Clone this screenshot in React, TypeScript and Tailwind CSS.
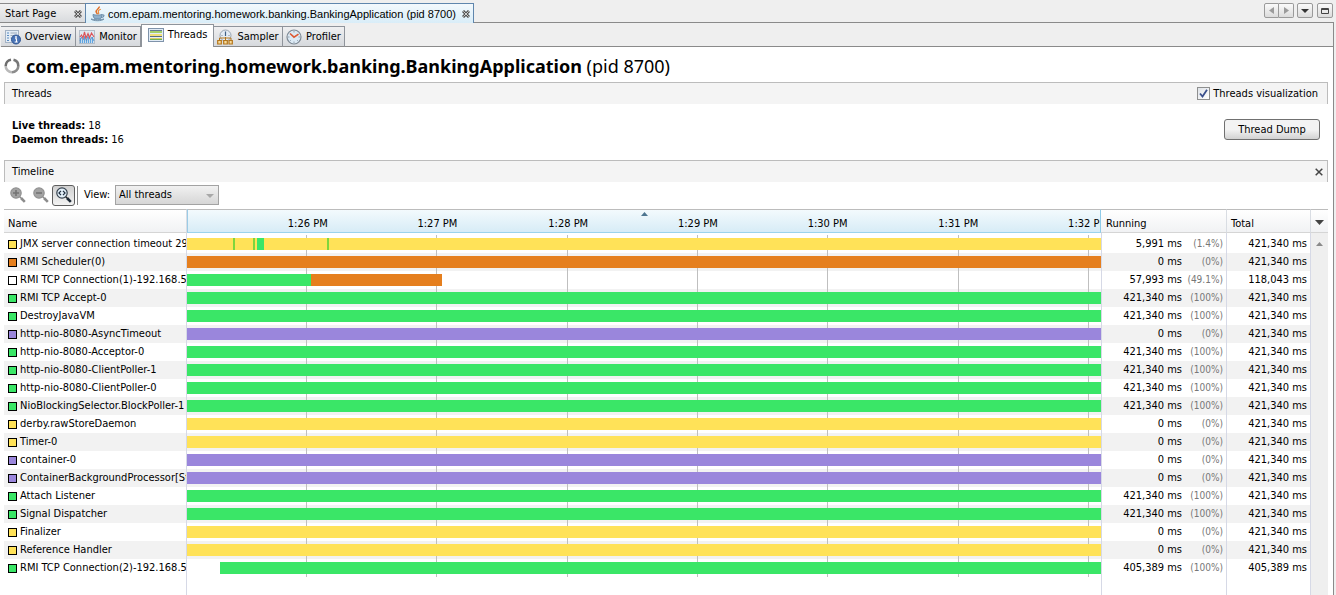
import { useState, type ReactNode } from "react";

const YELLOW = "#ffe258";
const ORANGE = "#e57f1e";
const GREEN = "#3ae667";
const PURPLE = "#9a86dc";
const LIME = "#7fd63c";
const WHITE = "#ffffff";

type Segment = { from: number; to: number; color: string };
type Thread = {
  name: string;
  state: string;
  segments: Segment[];
  running: string;
  percent: string;
  total: string;
};

const full = (name: string, color: string): Thread => ({
  name,
  state: color,
  segments: [{ from: 0, to: 100, color }],
  running: color === GREEN ? "421,340 ms" : "0 ms",
  percent: color === GREEN ? "(100%)" : "(0%)",
  total: "421,340 ms",
});

const threads: Thread[] = [
  {
    name: "JMX server connection timeout 29",
    state: YELLOW,
    segments: [
      { from: 0, to: 100, color: YELLOW },
      { from: 5.03, to: 5.25, color: LIME },
      { from: 7.22, to: 7.44, color: LIME },
      { from: 7.66, to: 8.42, color: GREEN },
      { from: 15.32, to: 15.54, color: LIME },
    ],
    running: "5,991 ms",
    percent: "(1.4%)",
    total: "421,340 ms",
  },
  full("RMI Scheduler(0)", ORANGE),
  {
    name: "RMI TCP Connection(1)-192.168.56.1",
    state: WHITE,
    segments: [
      { from: 0, to: 13.57, color: GREEN },
      { from: 13.57, to: 27.9, color: ORANGE },
    ],
    running: "57,993 ms",
    percent: "(49.1%)",
    total: "118,043 ms",
  },
  full("RMI TCP Accept-0", GREEN),
  full("DestroyJavaVM", GREEN),
  full("http-nio-8080-AsyncTimeout", PURPLE),
  full("http-nio-8080-Acceptor-0", GREEN),
  full("http-nio-8080-ClientPoller-1", GREEN),
  full("http-nio-8080-ClientPoller-0", GREEN),
  full("NioBlockingSelector.BlockPoller-1", GREEN),
  full("derby.rawStoreDaemon", YELLOW),
  full("Timer-0", YELLOW),
  full("container-0", PURPLE),
  full("ContainerBackgroundProcessor[StandardEngine]", PURPLE),
  full("Attach Listener", GREEN),
  full("Signal Dispatcher", GREEN),
  full("Finalizer", YELLOW),
  full("Reference Handler", YELLOW),
  {
    name: "RMI TCP Connection(2)-192.168.56.1",
    state: GREEN,
    segments: [{ from: 3.61, to: 100, color: GREEN }],
    running: "405,389 ms",
    percent: "(100%)",
    total: "405,389 ms",
  },
];

const ticks = [
  { at: 13.02, label: "1:26 PM" },
  { at: 27.24, label: "1:27 PM" },
  { at: 41.58, label: "1:28 PM" },
  { at: 55.8, label: "1:29 PM" },
  { at: 70.02, label: "1:30 PM" },
  { at: 84.35, label: "1:31 PM" },
  { at: 98.58, label: "1:32 PM" },
];

function JavaIcon() {
  return (
    <svg width="16" height="16" viewBox="0 0 16 16" fill="none" aria-hidden="true">
      <path d="M9.2 0.5C10 2.4 5.4 3.6 6.2 6c.3 1 1.2 1.4 1.1 2.4" stroke="#e0702a" strokeWidth="1.5" />
      <path d="M10.8 3.2C8.6 4 7.7 5 8.5 6.2c.5.8.4 1.4-.3 2" stroke="#e98b3c" strokeWidth="1.2" />
      <path d="M3 8.5c2 .9 7 .9 9 0-.1 2-.8 3.6-1.9 4.4H5C3.8 12 3.1 10.5 3 8.5Z" fill="#8fb0cb" stroke="#6d8eac" />
      <path d="M12 9c2.5-.8 3 2-.9 2.7" stroke="#6d8eac" strokeWidth="1.2" />
      <path d="M1 13c2 2.300 11 2.300 13 0-2.500 1-10.500 1-13 0Z" fill="#b9cddc" stroke="#7593ac" />
    </svg>
  );
}

function TabCloseIcon() {
  return (
    <svg width="8" height="8" viewBox="0 0 8 8" fill="none" aria-hidden="true">
      <path d="M1 1l6 6M7 1L1 7" stroke="#555" strokeWidth="3" />
      <path d="M1.3 1.3l5.4 5.4M6.7 1.3L1.3 6.7" stroke="#eee" strokeWidth="0.8" />
    </svg>
  );
}

function OverviewIcon() {
  return (
    <svg width="16" height="16" viewBox="0 0 16 16" aria-hidden="true">
      <rect x="0.5" y="1.5" width="13" height="12" fill="#e4edf6" stroke="#a3b2c4" />
      <path d="M2 4h2M2 6.500h2M2 9h2M2 11.500h2" stroke="#5b8cc2" />
      <path d="M5.5 4H12M5.5 6.500H9M5.5 9H7" stroke="#9caaba" />
      <circle cx="11" cy="10.5" r="4.5" fill="#4a74b6" stroke="#2f5491" />
      <circle cx="11" cy="8" r="0.9" fill="#fff" />
      <path d="M10 9.8h1.500V13M9.700 13h3" stroke="#fff" strokeWidth="1.1" fill="none" />
    </svg>
  );
}

function MonitorIcon() {
  return (
    <svg width="16" height="16" viewBox="0 0 16 16" fill="none" aria-hidden="true">
      <rect x="0.5" y="1.5" width="15" height="13" fill="#dfe8f1" stroke="#b4bdc8" />
      <path d="M1.500 14V9M3.500 14v-3M5.500 14V8M7.500 14v-4M9.500 14V8M11.500 14v-3M13.500 14V8" stroke="#5fa4e0" strokeWidth="1.2" />
      <path d="M1 12l1.500-4L4 11l2-4 1.500 5 2-7 2 6L13 8l2 4" stroke="#5293cf" strokeWidth="0.9" />
      <path d="M1 8l1.500-2L4 9l1.500-6L7 9l2-4.500L10.500 9l2-5L15 8" stroke="#dc5258" strokeWidth="1.1" />
    </svg>
  );
}

function ThreadsIcon() {
  return (
    <svg width="16" height="16" viewBox="0 0 16 16" shapeRendering="crispEdges" aria-hidden="true">
      <rect x="0.5" y="1.5" width="15" height="13" fill="#e2ecf7" stroke="#7f93aa" />
      <rect x="2" y="3" width="12" height="1" fill="#65798f" />
      <rect x="2" y="4" width="12" height="2" fill="#a4cf68" />
      <rect x="2" y="7" width="12" height="2" fill="#f1df78" />
      <rect x="2" y="9" width="12" height="1" fill="#5a6c80" />
      <rect x="2" y="11" width="12" height="1" fill="#d9cf62" />
      <rect x="2" y="12" width="12" height="1" fill="#6fae54" />
    </svg>
  );
}

function SamplerIcon() {
  return (
    <svg width="16" height="16" viewBox="0 0 16 16" fill="none" aria-hidden="true">
      <circle cx="8.5" cy="6.5" r="5.5" fill="#e3ecf4" stroke="#98a4b1" />
      <path d="M8.500 2.500V7" stroke="#3f5f83" strokeWidth="1.200" />
      <path d="M4.500 6.500h1M11.500 6.500h1" stroke="#7d8b9a" />
      <path d="M2.500 11V9h11.500v2M8.500 8v3" stroke="#b5761b" />
      <path d="M0.700 11.500h3.600v3.500H.7ZM6.700 11.500h3.600v3.500H6.700ZM12 11.500h3.300v3.500H12Z" fill="#f7dc9c" stroke="#b5761b" strokeWidth="1.200" />
    </svg>
  );
}

function ProfilerIcon() {
  return (
    <svg width="16" height="16" viewBox="0 0 16 16" fill="none" aria-hidden="true">
      <circle cx="8" cy="8" r="7" fill="#dceaf5" stroke="#7f8a95" strokeWidth="1.200" />
      <path d="M8 2v1.500M8 12.500V14M2 8h1.500M12.500 8H14M3.800 12.200l1-1M12.200 12.200l-1-1" stroke="#93a1ae" />
      <path d="M4 4.500L8 8.200l4.500-3" stroke="#dd5a34" strokeWidth="1.600" />
    </svg>
  );
}

function SpinnerIcon() {
  return (
    <svg width="16" height="16" viewBox="0 0 16 16" fill="none" strokeWidth="2.600" aria-hidden="true">
      <path d="M9.500 1.800A6.300 6.300 0 0 1 14.300 8" stroke="#777" />
      <path d="M14.300 8A6.300 6.300 0 0 1 8 14.300" stroke="#8c8c8c" />
      <path d="M8 14.300A6.300 6.300 0 0 1 1.700 8" stroke="#b9b9b9" />
      <path d="M1.700 8A6.300 6.300 0 0 1 7 1.800" stroke="#6e6e6e" />
    </svg>
  );
}

function Magnifier({ kind }: { kind: "in" | "out" | "fit" }) {
  const fit = kind === "fit";
  return (
    <svg width="16" height="16" viewBox="0 0 16 16" fill="none" aria-hidden="true">
      <path d="M9.500 9.500L11 11" stroke={fit ? "#222" : "#8a8a8a"} strokeWidth="1.500" />
      <path d="M11 11l3.800 3.800" stroke={fit ? "#1d2936" : "#8c8c8c"} strokeWidth="2.600" />
      <circle cx="6" cy="6" r="5.200" fill={fit ? "#e3f0fa" : "#a3a3a3"} stroke={fit ? "#35414d" : "#929292"} strokeWidth="1.200" />
      {kind === "in" && <path d="M3 6h6M6 3v6" stroke="#747474" strokeWidth="1.600" />}
      {kind === "out" && <path d="M3 6h6" stroke="#747474" strokeWidth="1.600" />}
      {fit && <path d="M5 3.800L2.900 6 5 8.200M7 3.800L9.100 6 7 8.200" stroke="#1f2f40" strokeWidth="1.200" />}
    </svg>
  );
}

function SubTab({ icon, label, width, active }: { icon: ReactNode; label: string; width: string; active?: boolean }) {
  return (
    <button
      type="button"
      role="tab"
      aria-selected={!!active}
      className={`${width} flex items-center justify-center gap-1 border-r border-[#8f949b] ${
        active
          ? "h-[23px] border-t border-l bg-white pb-[2px]"
          : "h-[21px] border-t border-b border-b-[#8a8a8a] bg-linear-to-b from-[#f0f0f1] to-[#d6d9dd] pt-px"
      }`}
    >
      {icon}
      {label}
    </button>
  );
}

function SectionBar({ title, children }: { title: string; children: ReactNode }) {
  return (
    <div className="flex h-[22px] items-center justify-between border-x border-t border-[#bcbcbc] bg-[#f4f4f4] pl-[7px]">
      <h2>{title}</h2>
      {children}
    </div>
  );
}

function TimelineBars({ segments }: { segments: Segment[] }) {
  return (
    <svg width="100%" height="18" className="block" aria-hidden="true" shapeRendering="crispEdges">
      {ticks.map((t) => (
        <rect key={t.label} x={`${t.at}%`} y="0" width="1" height="18" fill="#bfbfbf" />
      ))}
      {segments.map((s, i) => (
        <rect key={i} x={`${s.from}%`} y="3" width={`${s.to - s.from}%`} height="12" fill={s.color} />
      ))}
    </svg>
  );
}

const windowButton =
  "flex h-[15px] items-center justify-center border border-[#9a9a9a] bg-linear-to-b from-[#fafafa] to-[#dcdcdc]";

export default function App() {
  const [visualize, setVisualize] = useState(true);
  const header = "border-t border-b border-t-[#bcbcbc] border-b-[#d5d5d5] bg-linear-to-b from-white to-[#f1f2f4] p-0 text-left font-normal";

  return (
    <div className="flex min-h-screen flex-col bg-[#efefef] pr-[2px] font-['DejaVu_Sans_Condensed','DejaVu_Sans',sans-serif] text-[11px] leading-[14px] text-black">
      <div className="flex h-[23px] items-stretch pt-[3px]">
        <div className="flex w-[85px] items-center justify-between border-t border-b border-[#8a8a8a] bg-linear-to-b from-[#f2f2f2] to-[#d9dbde] pt-px pr-[3px] pl-[5px]">
          <a href="#start">Start Page</a>
          <button type="button" aria-label="Close Start Page">
            <TabCloseIcon />
          </button>
        </div>
        <div className="flex w-[389px] items-center justify-between border-x border-t border-[#5f86ad] bg-linear-to-b from-[#f3f9fd] to-[#d9edf8] pr-[3px] pl-1">
          <a href="#application" className="flex items-center gap-[2px] whitespace-nowrap font-['Liberation_Sans',Arial,sans-serif]">
            <JavaIcon />
            com.epam.mentoring.homework.banking.BankingApplication (pid 8700)
          </a>
          <button type="button" aria-label="Close application">
            <TabCloseIcon />
          </button>
        </div>
        <div className="flex flex-1 items-start justify-end border-b border-[#8a8a8a] pr-px">
          <button type="button" aria-label="Scroll left" className={`${windowButton} w-[15px] rounded-l-[2px]`}>
            <svg width="5" height="7" viewBox="0 0 5 7"><path d="M5 0v7L0 3.500Z" fill="#9b9b9b" /></svg>
          </button>
          <button type="button" aria-label="Scroll right" className={`${windowButton} mr-[3px] w-[15px] rounded-r-[2px] border-l-0`}>
            <svg width="5" height="7" viewBox="0 0 5 7"><path d="M0 0v7l5-3.500Z" fill="#9b9b9b" /></svg>
          </button>
          <button type="button" aria-label="Tab list" className={`${windowButton} mr-1 w-[16px] rounded-[2px] border-[#6f6f6f]`}>
            <svg width="8" height="4" viewBox="0 0 8 4"><path d="M0 0h8L4 4Z" fill="#333" /></svg>
          </button>
          <button type="button" aria-label="Maximize" className={`${windowButton} w-[16px] rounded-[2px] border-[#6f6f6f]`}>
            <svg width="8" height="6" viewBox="0 0 8 6"><path d="M0.500 0.500h7v5h-7ZM0 1.500h8" fill="none" stroke="#444" /></svg>
          </button>
        </div>
      </div>

      <div className="flex flex-1 flex-col border-r border-[#8a8a8a]">
        <div role="tablist" className="flex h-6 items-end pl-px">
          <SubTab icon={<OverviewIcon />} label="Overview" width="w-[75px]" />
          <SubTab icon={<MonitorIcon />} label="Monitor" width="w-[65px]" />
          <SubTab icon={<ThreadsIcon />} label="Threads" width="w-[73px]" active />
          <SubTab icon={<SamplerIcon />} label="Sampler" width="w-[69px]" />
          <SubTab icon={<ProfilerIcon />} label="Profiler" width="w-[62px]" />
          <div className="h-px flex-1 bg-[#8a8a8a]" />
        </div>

        <div className="flex flex-1 flex-col bg-white pr-[5px] pl-1">
          <div className="flex h-[35px] items-center gap-[6px] pt-[2px] font-['Noto_Sans',sans-serif] text-[18px] leading-6">
            <SpinnerIcon />
            <h1>
              <strong>com.epam.mentoring.homework.banking.BankingApplication</strong> (pid 8700)
            </h1>
          </div>

          <SectionBar title="Threads">
            <label className="flex items-center gap-[3px] pr-[9px]">
              <span className="grid place-items-center">
                <input
                  type="checkbox"
                  checked={visualize}
                  onChange={(e) => setVisualize(e.target.checked)}
                  className="col-start-1 row-start-1 size-[13px] appearance-none border border-[#8e8f8f] bg-linear-to-br from-[#dfe3e8] to-white"
                />
                {visualize && (
                  <svg width="9" height="9" viewBox="0 0 9 9" className="pointer-events-none col-start-1 row-start-1" aria-hidden="true">
                    <path d="M1 4.500L3.500 7.500 8 0.800" fill="none" stroke="#3a4f8c" strokeWidth="1.800" />
                  </svg>
                )}
              </span>
              Threads visualization
            </label>
          </SectionBar>

          <div className="flex h-14 items-start justify-between pt-[15px] pr-2 pl-2">
            <dl>
              <div className="flex gap-[3px]">
                <dt className="font-bold">Live threads:</dt>
                <dd>18</dd>
              </div>
              <div className="flex gap-[3px]">
                <dt className="font-bold">Daemon threads:</dt>
                <dd>16</dd>
              </div>
            </dl>
            <button
              type="button"
              className="h-[21px] w-[96px] rounded-[3px] border border-[#707070] bg-linear-to-b from-[#f3f3f3] from-50% to-[#d2d2d2]"
            >
              Thread Dump
            </button>
          </div>

          <SectionBar title="Timeline">
            <button type="button" aria-label="Close timeline" className="pr-1">
              <svg width="8" height="8" viewBox="0 0 8 8"><path d="M0.700 0.700l6.600 6.600M7.300 0.700L0.700 7.300" stroke="#444" strokeWidth="1.500" /></svg>
            </button>
          </SectionBar>

          <div className="flex h-[27px] items-center pb-px pl-[6px]">
            <button type="button" aria-label="Zoom in" className="mr-[7px]"><Magnifier kind="in" /></button>
            <button type="button" aria-label="Zoom out" className="mr-[3px]"><Magnifier kind="out" /></button>
            <button
              type="button"
              aria-label="Scale to fit"
              aria-pressed="true"
              className="flex h-[21px] w-[23px] items-center justify-center rounded-[3px] border border-[#5e5e5e] bg-linear-to-b from-[#d0d0d0] to-[#f3f3f3]"
            >
              <Magnifier kind="fit" />
            </button>
            <div className="mx-[2px] h-[19px] w-px bg-[#8a8a8a]" />
            <label htmlFor="view" className="w-[35px] pl-1">View:</label>
            <div className="grid items-center">
              <select
                id="view"
                className="col-start-1 row-start-1 h-5 w-[104px] appearance-none border border-[#a3a3a3] bg-linear-to-b from-[#f1f1f1] to-[#d6d6d6] pl-[3px]"
              >
                <option>All threads</option>
                <option>Live threads</option>
                <option>Finished threads</option>
              </select>
              <svg width="8" height="4" viewBox="0 0 8 4" className="pointer-events-none col-start-1 row-start-1 mt-[2px] mr-[5px] justify-self-end" aria-hidden="true">
                <path d="M0 0h8L4 4Z" fill="#a8a8a8" />
              </svg>
            </div>
          </div>

          <table className="w-full table-fixed border-separate border-spacing-0">
            <colgroup>
              <col className="w-[183px]" />
              <col />
              <col className="w-[125px]" />
              <col className="w-[84px]" />
              <col className="w-[18px]" />
            </colgroup>
            <thead>
              <tr className="h-6">
                <th className={`${header} border-r border-r-[#d9dde3] pt-[5px] pl-1`}>Name</th>
                <th
                  aria-label="Timeline"
                  className="border border-t-[#bcbcbc] border-r-[#8fcbe8] border-b-[#9bd3ec] border-l-[#9bcbe6] bg-linear-to-b from-[#f3fafd] to-[#d7ecf6] p-0 font-normal"
                >
                  <div className="relative h-[22px] overflow-hidden">
                    <svg width="7" height="4" viewBox="0 0 7 4" className="mx-auto mt-[2px]" aria-hidden="true">
                      <path d="M0 4L3.500 0 7 4Z" fill="#4d7590" />
                    </svg>
                    {ticks.map((t) => (
                      <span
                        key={t.label}
                        className="absolute top-[7px] ml-px -translate-x-1/2 whitespace-nowrap"
                        style={{ left: `${t.at}%` }}
                      >
                        {t.label}
                      </span>
                    ))}
                  </div>
                </th>
                <th className={`${header} pt-[5px] pl-[5px]`}>Running</th>
                <th className={`${header} border-l border-l-[#d9dde3] pt-[5px] pl-1`}>Total</th>
                <th className={`${header} border-l border-l-[#d9dde3]`}>
                  <button type="button" aria-label="Choose columns" className="flex w-full justify-center pt-[3px]">
                    <svg width="9" height="5" viewBox="0 0 9 5"><path d="M0 0h9L4.500 5Z" fill="#444" /></svg>
                  </button>
                </th>
              </tr>
            </thead>
            <tbody>
              <tr aria-hidden="true" className="h-[2px]">
                <td className="border-r border-[#d6d9e6] p-0" />
                <td className="p-0" />
                <td className="border-l border-[#d6d9e6] p-0" />
                <td className="border-l border-[#d6d9e6] p-0" />
                <td className="border-l border-[#d6d9e6] bg-[#efefef] p-0" />
              </tr>
              {threads.map((t, i) => (
                <tr key={t.name} className={`h-[18px] ${i % 2 ? "bg-[#f2f2f2]" : "bg-white"}`}>
                  <td className="border-r border-[#d6d9e6] p-0">
                    <div className="flex items-center gap-[3px] overflow-hidden pl-1 whitespace-nowrap">
                      <span className="size-[9px] shrink-0 border border-black" style={{ backgroundColor: t.state }} />
                      {t.name}
                    </div>
                  </td>
                  <td className="p-0">
                    <TimelineBars segments={t.segments} />
                  </td>
                  <td className="border-l border-[#d6d9e6] p-0">
                    <div className="flex items-center justify-end pr-[3px]">
                      {t.running}
                      <span className="w-[41px] text-right text-[10px] text-[#777]">{t.percent}</span>
                    </div>
                  </td>
                  <td className="border-l border-[#d6d9e6] p-0 pr-[3px] text-right">{t.total}</td>
                  {i === 0 && (
                    <td rowSpan={threads.length + 1} className="border-l border-[#d6d9e6] bg-[#efefef] p-0 align-top">
                      <button type="button" aria-label="Scroll up" className="flex h-[18px] w-full items-center justify-center">
                        <svg width="7" height="4" viewBox="0 0 7 4"><path d="M0 4L3.500 0 7 4Z" fill="#8a8a8a" /></svg>
                      </button>
                    </td>
                  )}
                </tr>
              ))}
              <tr aria-hidden="true" className="h-[18px]">
                <td className="border-r border-[#d6d9e6] p-0" />
                <td className="p-0" />
                <td className="border-l border-[#d6d9e6] p-0" />
                <td className="border-l border-[#d6d9e6] p-0" />
              </tr>
            </tbody>
          </table>
        </div>
      </div>
    </div>
  );
}
